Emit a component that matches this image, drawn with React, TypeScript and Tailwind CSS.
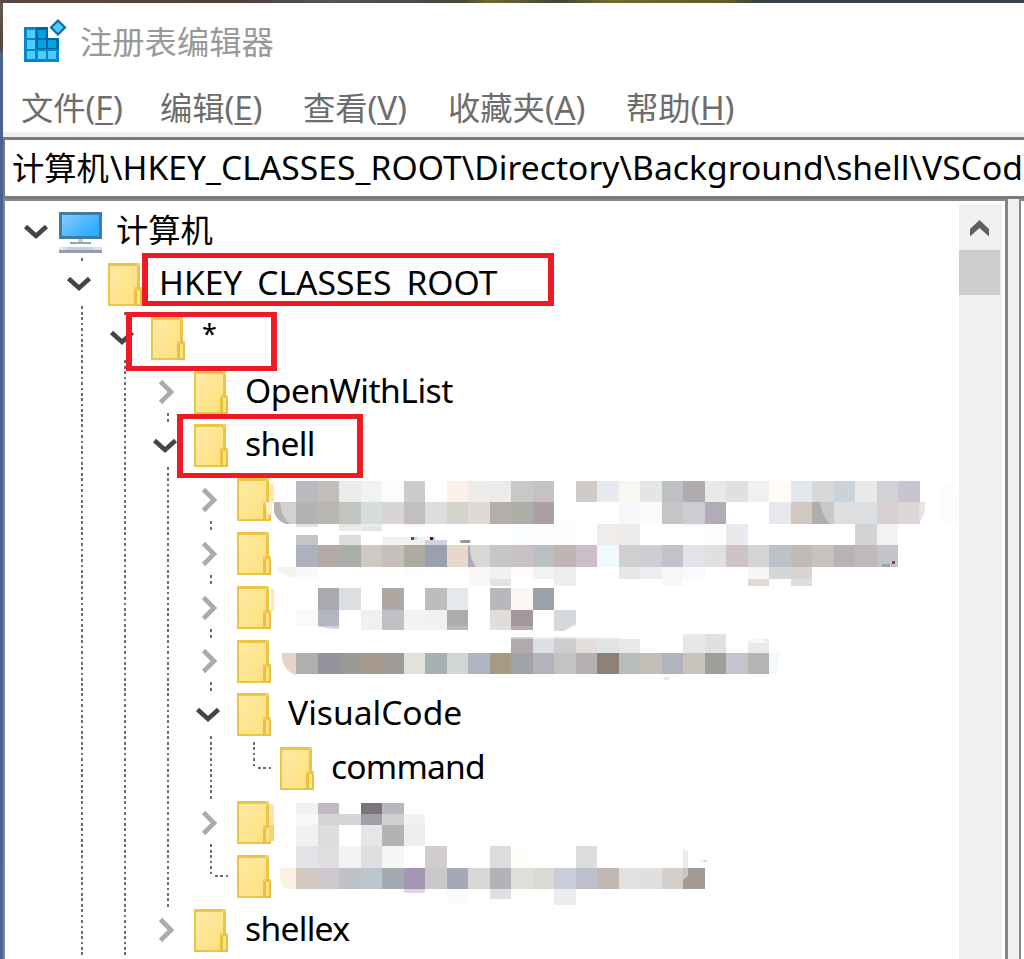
import type { ReactNode } from "react";

const LATIN = "font-['Noto_Sans','Noto_Sans_CJK_SC',sans-serif]";
const CJK = "font-['Noto_Sans_CJK_SC','Noto_Sans',sans-serif]";

/* ---------- icons ---------- */

function AppIcon() {
  return (
    <svg width="44" height="44" viewBox="0 0 44 44" shapeRendering="crispEdges">
      <path d="M0 8H24V19H35V43H0Z" fill="#0288d1" />
      <path d="M12 8H24V19H35V30H12Z" fill="#0068a6" />
      <g fill="#4fcbff">
        <rect x="3" y="11" width="8" height="8" />
        <rect x="3" y="21" width="8" height="9" />
        <rect x="3" y="32" width="8" height="8" />
        <rect x="14" y="32" width="8" height="8" />
        <rect x="24" y="32" width="8" height="8" />
      </g>
      <g fill="#02a4de">
        <rect x="14" y="11" width="8" height="8" />
        <rect x="14" y="21" width="8" height="8" />
        <rect x="24" y="21" width="8" height="8" />
      </g>
      <path d="M34 0L42.500 8.500L34 17L25.500 8.500Z" fill="#0a6d9f" shapeRendering="auto" />
      <path d="M34 3L39.500 8.500L34 14L28.500 8.500Z" fill="#4fcbff" shapeRendering="auto" />
    </svg>
  );
}

function ComputerIcon() {
  return (
    <svg width="43" height="42" viewBox="0 0 43 42" className="shrink-0">
      <defs>
        <linearGradient id="screen" x1="0" y1="0" x2="1" y2="0.7">
          <stop offset="0" stopColor="#86cfff" />
          <stop offset="0.5" stopColor="#55bbff" />
          <stop offset="1" stopColor="#2aabff" />
        </linearGradient>
      </defs>
      <rect width="43" height="27" fill="#417aa3" />
      <rect x="3" y="3" width="37" height="21" fill="url(#screen)" />
      <rect x="19" y="27" width="5" height="3" fill="#c3ccd4" />
      <rect x="11" y="30" width="21" height="2" fill="#93a4b6" />
      <rect x="0" y="35" width="43" height="3" fill="#dde3e4" />
      <rect x="8" y="35" width="26" height="3" fill="#c4d0d2" />
      <rect x="0" y="38" width="43" height="3" fill="#8f9db3" />
    </svg>
  );
}

function FolderIcon() {
  return (
    <svg width="34" height="43" viewBox="0 0 34 43" className="shrink-0" shapeRendering="crispEdges">
      <defs>
        <linearGradient id="paper" x1="0" y1="0" x2="1" y2="1">
          <stop offset="0" stopColor="#ffeaa6" />
          <stop offset="1" stopColor="#fee07c" />
        </linearGradient>
      </defs>
      <rect width="32" height="43" fill="#eac644" />
      <rect x="2" y="3" width="27" height="38" fill="url(#paper)" />
      <rect x="29" y="0" width="3" height="3" fill="#f0d468" />
      <rect x="26" y="24" width="8" height="19" fill="#e6c144" />
      <rect x="29" y="27" width="3" height="14" fill="#ffe184" />
      <rect x="26" y="24" width="3" height="3" fill="#f0cf62" />
      <rect x="32" y="24" width="2" height="3" fill="#f0cf62" />
    </svg>
  );
}

function Expander({ open }: { open: boolean }) {
  return open ? (
    <svg width="26" height="18" viewBox="0 0 26 18" fill="none" className="mt-[2px] mr-[6px]">
      <path d="M2.500 3.500L13 13L23.500 3.500" stroke="#454545" strokeWidth="4.600" />
    </svg>
  ) : (
    <svg width="18" height="26" viewBox="0 0 18 26" fill="none" className="mt-[3px] mr-[2px]">
      <path d="M2.500 2.500L13 13L2.500 23.500" stroke="#ababab" strokeWidth="4.600" />
    </svg>
  );
}

/* ---------- tree ---------- */

type Cell = "line" | "open" | "closed" | "closedLast" | "corner";

const dotsY =
  "bg-[repeating-linear-gradient(to_bottom,#6d6d6d_0px,#6d6d6d_2.700px,transparent_2.700px,transparent_5.380px)]";
const dotsX =
  "bg-[repeating-linear-gradient(to_right,#6d6d6d_0px,#6d6d6d_2.700px,transparent_2.700px,transparent_5.380px)]";

function Guide({ cell }: { cell: Cell }) {
  if (cell === "line") {
    return (
      <div className="flex h-full w-[43px] shrink-0 pl-[20.500px]">
        <div className={`w-[2px] ${dotsY}`} />
      </div>
    );
  }
  if (cell === "corner") {
    return (
      <div className="flex h-full w-[43px] shrink-0 pl-[20.500px]">
        <div className={`h-[27px] w-[2px] ${dotsY}`} />
        <div className={`mt-[25px] ml-[2.700px] h-[2px] w-[14px] ${dotsX}`} />
      </div>
    );
  }
  return (
    <div className="flex h-full w-[43px] shrink-0 flex-col items-center justify-between">
      <div className="h-[3px] w-[2px] bg-[#6d6d6d]" />
      <Expander open={cell === "open"} />
      <div
        className={`h-[6px] w-[2px] ${cell === "closedLast" ? "" : "bg-[linear-gradient(to_bottom,#6d6d6d_3px,#ffffff_3px)]"}`}
      />
    </div>
  );
}

const tree: { guides: Cell[]; label: ReactNode; style?: string }[] = [
  {
    guides: ["open"],
    label: (
      <>
        HKEY<span className="align-[-4px]">_</span>CLASSES<span className="align-[-4px]">_</span>ROOT
      </>
    ),
    style: "text-[33.600px] leading-[49px]",
  },
  { guides: ["line", "open"], label: "*", style: "text-[27px] leading-[43px]" },
  { guides: ["line", "line", "closed"], label: "OpenWithList", style: "text-[33.600px] leading-[49px] tracking-[-0.500px]" },
  { guides: ["line", "line", "open"], label: "shell", style: "text-[33.600px] leading-[49px] tracking-[-0.700px]" },
  { guides: ["line", "line", "line", "closed"], label: "" },
  { guides: ["line", "line", "line", "closed"], label: "" },
  { guides: ["line", "line", "line", "closed"], label: "" },
  { guides: ["line", "line", "line", "closed"], label: "" },
  { guides: ["line", "line", "line", "open"], label: "VisualCode", style: "text-[33.600px] leading-[49px]" },
  { guides: ["line", "line", "line", "line", "corner"], label: "command", style: "text-[33.600px] leading-[49px] tracking-[-0.800px]" },
  { guides: ["line", "line", "line", "closed"], label: "" },
  { guides: ["line", "line", "line", "corner"], label: "" },
  { guides: ["line", "line", "closedLast"], label: "shellex", style: "text-[33.600px] leading-[49px] tracking-[-0.700px]" },
];

function Tree() {
  return (
    <div className="pt-[3.200px] pl-[12.500px]">
      <div className="flex h-[53.800px] items-center">
        <div className="flex w-[43px] justify-center">
          <Expander open />
        </div>
        <div className="-ml-[1.500px] pt-[3px]">
          <ComputerIcon />
        </div>
        <span className={`ml-[14px] pb-[6px] text-[32.300px] leading-none ${CJK}`}>计算机</span>
      </div>
      {tree.map((row, i) => (
        <div key={i} className="flex h-[53.800px]">
          <div className="w-[43px] shrink-0" />
          {row.guides.map((g, k) => (
            <Guide key={k} cell={g} />
          ))}
          <div className="flex pt-[5px] pl-[4.500px]">
            <FolderIcon />
          </div>
          <span className={`ml-[17px] whitespace-pre ${LATIN} ${row.style ?? ""}`}>{row.label}</span>
        </div>
      ))}
    </div>
  );
}

/* ---------- pixelated redaction over private keys ---------- */

type Strip = { y: number; h: number; k: number; c: string };

const strips: Strip[] = [
  { y: 481, h: 21, k: 0, c: "b9bac0 c2bfba eaebed f2f2f2 fcfcfa cccccf - fbf1ea ececea ebebea c8c8c8 c4c2c4 - cfcbc7 e7eaef f8f7f2 e4e5e5 bdc1c4 b0acad e9e9e9 e0e0e0 eff0f2 fffcf4 e3e7f0 d8d8d8 cbd2da ebe9ea d1d2d5 c8c4d0" },
  { y: 502, h: 22, k: 0, c: "b3b3b6 b8b6b1 c0c5c0 d7dcdf d9d5d4 c3bec4 dddde0 d3d3ca dedad9 b4aeaa adb0a9 aaa0a6 - - - f6f8fa f9fbfd c4c5c7 cdccd2 b2acb8 - - e8e8ed d1c8bf c9c9c9 dedede dadfe1 d7d0d3 dcd7d4" },
  { y: 524, h: 3, k: 0, c: "e3e3e3 - e3e3e3 ececea - f7f7f7 - - - - - - - - - - - - f7f7f9" },
  { y: 527, h: 4, k: 2, c: "ededed e6e4e3" },
  { y: 524, h: 21, k: 10, c: "f9fdff fdfdfd fdfdfd - f0ecea ececec - - - fdfdfd ebe9ed - - - - - d3d3d5 f1f2f4" },
  { y: 535, h: 10, k: 0, c: "c4c5c9 - dddddf" },
  { y: 537, h: 8, k: 4, c: "f2f2f1 f1f1f1" },
  { y: 540, h: 5, k: 6, c: "d6d0e0" },
  { y: 545, h: 22, k: 0, c: "adb1bc b3aaa6 a9afa8 cfc9c4 c7bfbb aeaca0 9aa0af e8d7cd dad6d6 c5c6c6 c8c2c3 bac1c4 bfb3b3 ccbdc9 effaff d0cfce cfccd4 c5c1ca e1e3e9 e0e0e0 cec4c4 d2d5d4 bdc2c9 c0bbb8 c8c2bf b8b2b5 c0b9b9 c3c3c9" },
  { y: 567, h: 12, k: 0, c: "f9f9f9 - - - - fdfdfd - - fcf8f4 f1f1f2 fdfdfd f2f2f2 edeef0 - - e6e6e5 ededee f7f7f5 fafafa - - f7f6f4 d6d6d7 d9d5d2" },
  { y: 579, h: 7, k: 8, c: "fcf8f4 e2e3e5 - - edeef0 - - - - f7f7f5 - - - e1dad6 - e0ddda" },
  { y: 588, h: 22, k: 1, c: "a9aaaf dcdfe2 - afa8a2 - bdbdbe e5e9ec - b7b8bc faf7f3 9ba1a8" },
  { y: 610, h: 16, k: 0, c: "f9fbfb b3b6c0 - f0f0f1 c1c0c7 f2f2f0 f0f2f2 abadab - e0dcda a5979d - d5d9dc" },
  { y: 626, h: 4, k: 3, c: "f0f0f1 c1c0c7 f2f2f0 f0f2f2 b8bab8 - e4e0de b5aaaf" },
  { y: 637, h: 2, k: 10, c: "d0cbce eceef1 e3e3e4 f1efed eff2f4" },
  { y: 639, h: 14, k: 10, c: "b1a9ae dce0e5 cdccce e2dedc dfe4e7 e9e8e7 - - e5e7e6 dfe1e0 - e9e9e8" },
  { y: 634, h: 5, k: 18, c: "e8eae9 e1e3e2" },
  { y: 653, h: 21, k: 0, c: "afb0ab 9494a0 999998 a79a8a 9f9b97 e0e3da a7b0b3 d0d6d6 aeb5c0 a89987 9ea4a8 b5b3ba c3c3c2 b5b0b2 8f8173 b7bdbd c3beb8 b1b4be c9c3be 9e9e9a c4c4cf b3b5b4" },
  { y: 803, h: 11, k: 0, c: "f0f2f1 c1b8c0 - 7e727e b8b9bd" },
  { y: 814, h: 11, k: 0, c: "f7f8f8 d8d3d8 d6d4d8 a39fa6 cfd0d2 f0f2f1" },
  { y: 825, h: 21, k: 0, c: "f2f1f0 dddddd - e5e6e8 b3b3b4 eeeeef" },
  { y: 846, h: 22, k: 0, c: "e2e3e6 dfdfe0 f3f3f3 dedfe1 f6f6f7 - d1cccd - - dcdcdc fefefb - - dddddf" },
  { y: 868, h: 21, k: 0, c: "d3c9c1 cdc8ce bfc2c6 bbc6cd a3aab1 a596b2 cbc8cc a4aab5 d7d7d8 b3b2b7 dfdfda dadad5 c8ced7 bdc0ca c2b8b2 e2e1e0 e1e0e1 d5cfcb a39a94" },
  { y: 889, h: 4, k: 5, c: "ddd5e5" },
  { y: 889, h: 16, k: 7, c: "f9fcff - - - - e9edf0" },
  { y: 889, h: 10, k: 9, c: "e0e0e2" },
];

const columnX = (k: number) => Math.round(296 + k * 21.5);

function Mosaic() {
  return (
    <svg
      className="pointer-events-none absolute top-0 left-0"
      width="1024"
      height="959"
      viewBox="0 0 1024 959"
      shapeRendering="crispEdges"
    >
      {strips.flatMap((s, i) =>
        s.c.split(" ").map((c, j) =>
          c === "-" ? null : (
            <rect
              key={`${i}-${j}`}
              x={columnX(s.k + j)}
              y={s.y}
              width={columnX(s.k + j + 1) - columnX(s.k + j)}
              height={s.h}
              fill={`#${c}`}
            />
          ),
        ),
      )}
      {/* rounded brush ends */}
      <g shapeRendering="auto">
        <path d="M274 502H296V524H286Q277 521 274 512Z" fill="#d3d2d0" />
        <path d="M274 502H280Q281 517 290 524H286Q277 521 274 512Z" fill="#b5b2b0" />
        <path d="M276 567H296V578Q283 577 276 567Z" fill="#f6f1ef" />
        <path d="M282 653H296V675Q285 672 282 660Z" fill="#e7d3ca" />
        <path d="M280 868H296V889H287Q281 887 280 880Z" fill="#fbf2e3" />
        <path d="M919 502H925Q925 517 919 522Z" fill="#e8e4e6" />
        <path d="M812 502H820Q822 516 830 524H812Z" fill="#b1afae" />
        <path d="M468 545H470Q469 558 476 567H468Z" fill="#a8adb7" />
        <path d="M317 626H339V629Q328 629 317 626Z" fill="#cfd1d8" />
        <path d="M554 626H572Q568 630 563 631H554Z" fill="#d5d9dc" />
        <path d="M575 623V631H564Q573 629 575 623Z" fill="#ffffff" />
        <path d="M941 484Q957 484 957 502V524H941Z" fill="#fcfcfc" />
        <path d="M769 653H779V668L776 674H769Z" fill="#f6f9fc" />
        <path d="M683 848L688 852V868H683Z" fill="#ececeb" />
        <path d="M683 868H688V876L683 880Z" fill="#c9c4c2" />
        <path d="M747 639H762L769 643H747Z" fill="#f7f7f7" />
      </g>
      {/* leftover specks of covered text */}
      <rect x="411" y="537" width="3" height="3" fill="#6b4269" />
      <rect x="414" y="537" width="3" height="3" fill="#a5dcff" />
      <rect x="427" y="537" width="3" height="3" fill="#ffffb0" />
      <rect x="430" y="537" width="3" height="3" fill="#5c0036" />
      <rect x="433" y="537" width="2" height="3" fill="#90dbff" />
      <rect x="460" y="540" width="2" height="3" fill="#d3a083" />
      <rect x="462" y="540" width="8" height="3" fill="#969696" />
      <rect x="892" y="561" width="3" height="3" fill="#963d46" />
      <rect x="895" y="561" width="3" height="3" fill="#90dbff" />
      <rect x="882" y="564" width="8" height="3" fill="#9da0ae" />
      <rect x="664" y="677" width="5" height="3" fill="#e5edf4" />
      <rect x="701" y="860" width="3" height="2" fill="#ffe8d5" />
      <rect x="704" y="860" width="3" height="2" fill="#cddfee" />
      {/* faint smears beside the folders */}
      <path d="M269 484H274V502H269Z M271 589H274V611H271Z" fill="#fde8a9" />
      <path d="M266 502H272V516Q267 515 266 508Z" fill="#fbf0cc" />
      <rect x="269" y="804" width="5" height="21" fill="#fbe6ab" />
      <rect x="269" y="825" width="5" height="16" fill="#f5d568" />
    </svg>
  );
}

/* ---------- window ---------- */

function MenuItem({ text, hotkey, className }: { text: string; hotkey: string; className: string }) {
  return (
    <div className={`flex shrink-0 items-baseline whitespace-nowrap ${className}`}>
      <span className={`text-[32.300px] leading-[40px] ${CJK}`}>{text}</span>
      <span className={`text-[33px] leading-[40px] tracking-[-0.200px] ${LATIN}`}>
        (
        <span className="underline decoration-[2px] underline-offset-[3px] [text-decoration-skip-ink:none]">{hotkey}</span>
        )
      </span>
    </div>
  );
}

function Highlight({ className }: { className: string }) {
  return <div className={`absolute border-x-[6px] border-y-[5px] border-[#ed1c24] ${className}`} />;
}

export default function App() {
  return (
    <div className="relative flex h-[959px] w-[1024px] flex-col overflow-hidden bg-white text-black">
      <div className="h-[3px] shrink-0 bg-[linear-gradient(to_right,#5b4a43_0px,#4d4039_240px,#54525a_330px,#4a443a_460px,#6c6a2c_490px,#45423a_560px,#6f6c2e_610px,#5f5b28_730px,#353f45_760px,#3a4349_1024px)]" />
      <div className="flex min-h-0 grow">
        <div className="w-[3px] shrink-0 bg-[linear-gradient(to_bottom,#66564e_0px,#50453f_46px,#4a6190_50px,#4a6694_959px)]" />
        <div className="flex min-w-0 grow flex-col">
          <div className="flex h-[78px] shrink-0 pl-[21px]">
            <div className="pt-4">
              <AppIcon />
            </div>
            <span className={`ml-3 pt-[17px] text-[32.300px] leading-[40px] text-[#999999] ${CJK}`}>注册表编辑器</span>
          </div>
          <div className="flex h-[51px] shrink-0 pt-[5px] pl-[18px] text-[#6d6d6d]">
            <MenuItem text="文件" hotkey="F" className="w-[139px]" />
            <MenuItem text="编辑" hotkey="E" className="w-[143px]" />
            <MenuItem text="查看" hotkey="V" className="w-[145px]" />
            <MenuItem text="收藏夹" hotkey="A" className="w-[178px]" />
            <MenuItem text="帮助" hotkey="H" className="w-[120px]" />
          </div>
          <div className="h-[5px] shrink-0 bg-[#f0f0f0]" />
          <div className="flex h-[62px] shrink-0 items-baseline border-y-[3px] border-l-2 border-[#7a7a7a] pl-[7px] whitespace-nowrap">
            <span className={`text-[32.300px] leading-[53px] ${CJK}`}>计算机</span>
            <span className={`ml-px text-[33.600px] leading-[53px] tracking-[0.050px] ${LATIN}`}>
              {"\\HKEY_CLASSES_ROOT\\Directory\\Background\\shell\\VSCod"}
            </span>
          </div>
          <div className="flex min-h-0 grow">
            <div className="flex w-[1005px] shrink-0 overflow-hidden border-t-2 border-r-[3px] border-l-2 border-[#828790]">
              <div className="w-[954px] shrink-0">
                <Tree />
              </div>
              <div className="mt-[3px] flex w-[43px] shrink-0 flex-col bg-[#f0f0f0]">
                <div className="flex h-[46px] items-center justify-center pt-[3px] pr-[2px]">
                  <svg width="19" height="17" viewBox="0 0 19 17" fill="#606060">
                    <path d="M9.500 0L19 9V16.500L9.500 8L0 16.500V9Z" />
                  </svg>
                </div>
                <div className="h-[45px] w-[41px] bg-[#cdcdcd]" />
              </div>
            </div>
            <div className="w-[11px] shrink-0 bg-[#f0f0f0]" />
            <div className="grow border-t-2 border-l-2 border-[#828790]" />
          </div>
        </div>
      </div>
      <Mosaic />
      <Highlight className="top-[253px] left-[142px] h-[53px] w-[412px]" />
      <Highlight className="top-[312px] left-[126px] h-[59px] w-[151px]" />
      <Highlight className="top-[414px] left-[177px] h-[64px] w-[186px]" />
    </div>
  );
}
